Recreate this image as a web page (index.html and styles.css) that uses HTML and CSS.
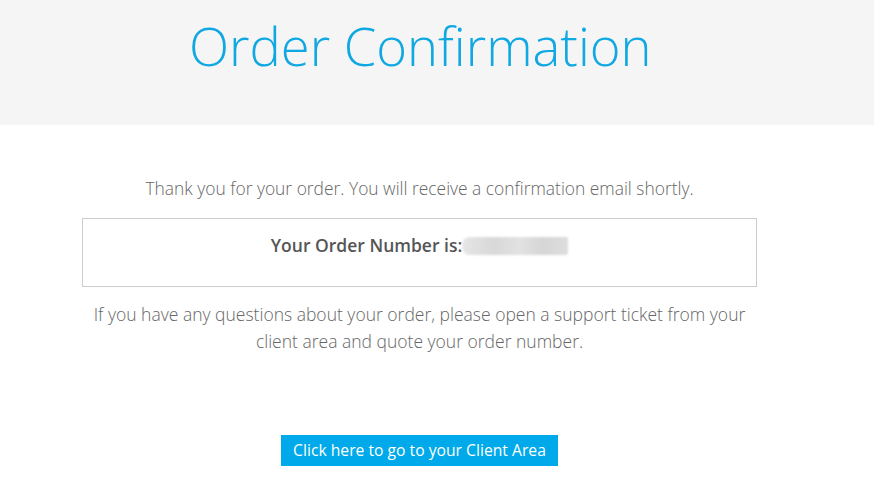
FILE: index.html
```html
<html>
<head>
  <meta charset="UTF-8">
  <meta name="viewport" content="width=device-width, initial-scale=1.0">
  <title>Order Confirmation</title>
  <link rel="stylesheet" href="styles.css">
</head>
<body>
  <div class="page-header">
    <h1>Order Confirmation</h1>
  </div>

  <div class="content">
    <p class="thanks">Thank you for your order. You will receive a confirmation email shortly.</p>

    <div class="order-box">
      <span class="order-label">Your Order Number is:</span><span class="order-number"></span>
    </div>

    <p class="notice">
      If you have any questions about your order, please open a support ticket from your client area and quote your order number.
    </p>

    <div class="actions">
      <a href="#" class="btn">Click here to go to your Client Area</a>
    </div>
  </div>
</body>
</html>
```

FILE: styles.css
```css
body {
    margin: 0;
    padding: 0;
    font-family: 'Open Sans', 'Liberation Sans', sans-serif;
    font-weight: 300;
    background-color: #ffffff;
    color: #666666;
}

/* Header band */
.page-header {
    background-color: #f5f5f5;
    height: 125px;
    padding-left: 189px;
    box-sizing: border-box;
}

h1 {
    margin: 0;
    padding-top: 10px;
    font-size: 52.5px;
    font-weight: 300;
    line-height: 72px;
    color: #0fa8e2;
}

/* Main content */
.content {
    width: 675px;
    margin-left: 82px;
    padding-top: 48px;
    text-align: center;
}

.thanks {
    margin: 0 0 15px;
    font-size: 17.4px;
    line-height: 30px;
}

.order-box {
    border: 1px solid #cccccc;
    height: 69px;
    padding-top: 11px;
    box-sizing: border-box;
}

.order-label {
    font-size: 17.5px;
    font-weight: 600;
    line-height: 30px;
    color: #555555;
}

.order-number {
    display: inline-block;
    width: 106px;
    height: 18px;
    vertical-align: -3px;
    background: linear-gradient(90deg, #e6e6e6 0%, #d8d8d8 30%, #e2e2e2 55%, #d6d6d6 75%, #dddddd 100%);
    border-radius: 8px 2px 2px 8px;
    filter: blur(1px);
}

.notice {
    margin: 14px 0 0;
    font-size: 17.5px;
    line-height: 27px;
}

.actions {
    margin-top: 80px;
}

.btn {
    display: inline-block;
    background-color: #00a9e9;
    color: #ffffff;
    padding: 0 12px;
    height: 31px;
    line-height: 31px;
    font-size: 15.7px;
    font-weight: 400;
    text-decoration: none;
}
```
